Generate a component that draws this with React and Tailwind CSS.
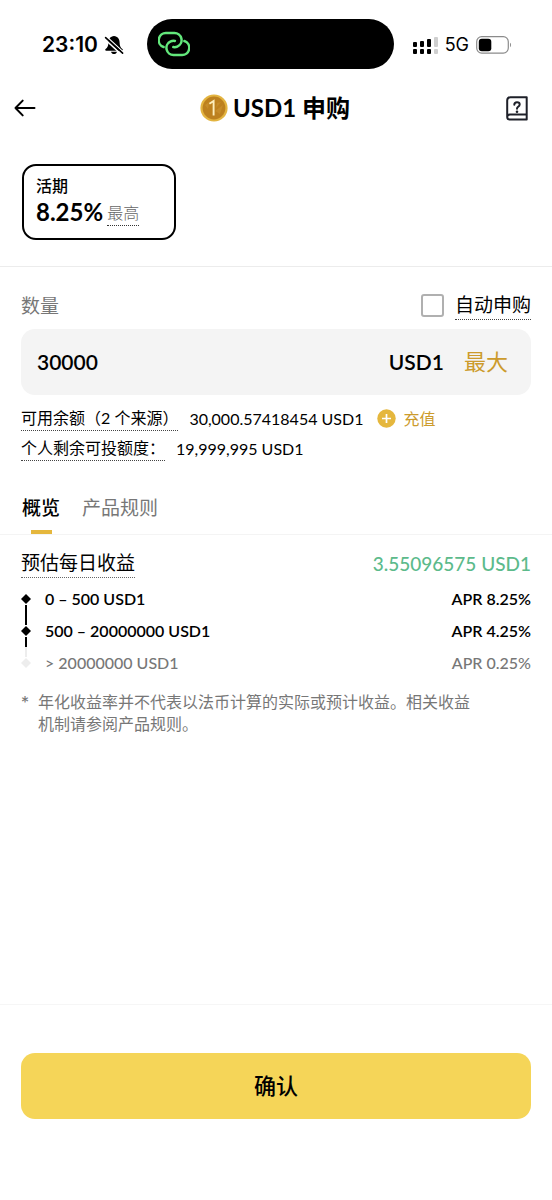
import React from "react";

const tiers = [
  { range: "0 – 500 USD1", apr: "APR 8.25%", active: true },
  { range: "500 – 20000000 USD1", apr: "APR 4.25%", active: true },
  { range: "> 20000000 USD1", apr: "APR 0.25%", active: false },
];

function StatusBar() {
  return (
    <div className="flex h-[88px] items-center pr-[40px] pl-[42px] font-['Inter','Noto_Sans_CJK_SC',sans-serif]">
      <div className="flex w-[105px] items-center gap-[6px] pt-[2px]">
        <span className="text-[21px] leading-6 font-semibold">23:10</span>
        <svg className="h-[20px] w-[20px]" viewBox="0 0 20 20" fill="none" aria-hidden="true">
          <path d="M10 1c-3.600.4-5.600 2.900-5.600 6.400 0 3.600-1 5.100-2.800 6.600-.8.600-.4 1.700.600 1.700h15.600c1 0 1.400-1.100.600-1.700-1.800-1.500-2.800-3-2.800-6.600 0-3.500-2-6-5.600-6.400zM7 16.700h6c-.4 1.500-1.600 2.300-3 2.300s-2.600-.8-3-2.300z" fill="#000" />
          <path d="M.8 4.200 16.800 19" stroke="#fff" strokeWidth="1.600" />
          <path d="M2.800 1.800 19 16.800" stroke="#fff" strokeWidth="1.200" />
          <path d="M1.600 2.600 18.600 18.200" stroke="#000" strokeWidth="1.600" strokeLinecap="round" />
        </svg>
      </div>
      <div className="flex h-[50px] min-w-0 flex-1 items-center rounded-full bg-black pl-[11px]">
        <svg className="h-[26px] w-[32px]" viewBox="0 0 32 26" fill="none" stroke="#63e87c" strokeWidth="2.500" strokeLinecap="round" aria-hidden="true">
          <path d="M5.600 16A7.200 7.200 0 0 1 8.300 2H16.200A7.100 7.100 0 0 1 19.300 15.600Q17.500 16.500 15.300 16.100" />
          <path d="M26.400 10A7.200 7.200 0 0 1 23.700 24H15.800A7.100 7.100 0 0 1 12.700 10.400Q14.500 9.500 16.900 9.900" />
        </svg>
      </div>
      <div className="ml-[19px] flex items-center gap-[7px] pt-[2px]">
        <svg className="h-[18px] w-[25px]" viewBox="0 0 25 18" aria-hidden="true">
          <rect x="0" y="6" width="4" height="5" rx="1" />
          <rect x="7" y="5" width="4" height="6" rx="1" />
          <rect x="14" y="3" width="4" height="8" rx="1" />
          <rect x="21" y="1" width="4" height="10" rx="1" fill="#cfcfcf" />
          <rect x="0" y="13" width="4" height="5" rx="1" />
          <rect x="7" y="13" width="4" height="5" rx="1" />
          <rect x="14" y="13" width="4" height="5" rx="1" />
          <rect x="21" y="13" width="4" height="5" rx="1" fill="#cfcfcf" />
        </svg>
        <span className="text-[18px] leading-6">5G</span>
        <svg className="h-[18px] w-[36px]" viewBox="0 0 36 18" aria-hidden="true">
          <rect x="0.700" y="0.700" width="31.600" height="16.400" rx="5" fill="none" stroke="#8b8b8b" strokeWidth="1.200" />
          <rect x="2.800" y="2.800" width="12.500" height="12.400" rx="3" />
          <path d="M34 6.800c1.400.6 1.400 3.800 0 4.400z" fill="#8b8b8b" />
        </svg>
      </div>
    </div>
  );
}

function Coin() {
  return (
    <svg className="h-[28px] w-[28px]" viewBox="0 0 28 28" aria-hidden="true">
      <circle cx="14" cy="14" r="13.600" fill="#e3b440" />
      <circle cx="14" cy="14" r="11.400" fill="#bd811f" />
      <path d="M15 17l8-6-3 9zM17 9l4-1-5 6zM5 11l4-3-1 7z" fill="#c68c2a" />
      <path d="M9.400 9.800 13.600 7V21.600" fill="none" stroke="#fdeebb" strokeWidth="1.900" />
    </svg>
  );
}

function Header() {
  return (
    <header className="grid h-10 grid-cols-[1fr_auto_1fr] items-center pr-[24px] pl-[14px]">
      <button type="button" aria-label="返回" className="justify-self-start">
        <svg className="h-[18px] w-[22px]" viewBox="0 0 22 18" fill="none" stroke="#000" strokeWidth="2" strokeLinecap="round" strokeLinejoin="round" aria-hidden="true">
          <path d="M20.500 9H1.500M8.700 1.600 1.500 9l7.200 7.400" />
        </svg>
      </button>
      <h1 className="flex items-center gap-[5px] pl-[8px] text-[24px] leading-8 font-bold">
        <Coin />
        <span>USD1 申购</span>
      </h1>
      <button type="button" aria-label="帮助" className="justify-self-end">
        <svg className="h-[25px] w-[22px]" viewBox="0 0 22 25" fill="none" stroke="#1e2029" strokeWidth="2" strokeLinejoin="round" aria-hidden="true">
          <path d="M1.200 21V4.500Q1.200 1.300 4.400 1.300H20.700V23.600H4Q1.200 23.600 1.200 21 1.200 18.400 4 18.400H20.500" />
          <path d="M8.300 8.700Q8.300 6.200 11 6.200t2.700 2.300Q13.700 10 12 10.900 11 11.500 11 12.800" strokeLinecap="round" />
          <circle cx="11" cy="15.700" r="1.300" fill="#1e2029" stroke="none" />
        </svg>
      </button>
    </header>
  );
}

function TierMarker({ index }) {
  const active = index < 2;
  return (
    <span className="flex w-[10px] flex-col items-center self-stretch" aria-hidden="true">
      <span className={index === 0 ? "w-[2px] flex-1" : index === 1 ? "w-[2px] flex-1 bg-black" : "w-[2px] flex-1 bg-[#ededed]"} />
      <svg className="h-[12px] w-[10px]" viewBox="0 0 10 12">
        <path d="M5 1 10 6 5 11 0 6z" fill={active ? "#000" : "#ededed"} />
      </svg>
      <span className={active ? "w-[2px] flex-1 bg-black" : "w-[2px] flex-1"} />
    </span>
  );
}

export default function App() {
  return (
    <div className="flex min-h-screen flex-col bg-white font-['Lato','Noto_Sans_CJK_SC',sans-serif] text-black">
      <StatusBar />
      <Header />

      <section className="border-b border-[#ececec] px-[22px] pt-[36px] pb-[26px]">
        <button type="button" className="block w-[154px] rounded-[14px] border-2 border-black px-[12px] pt-[8px] pb-[12px] text-left">
          <span className="block text-[16px] leading-6 font-medium">活期</span>
          <span className="flex items-center gap-[4px]">
            <span className="text-[24px] leading-7 font-bold">8.25%</span>
            <span className="mt-[3px] border-b border-dotted border-[#333] text-[16px] leading-6 font-light text-[#666]">最高</span>
          </span>
        </button>
      </section>

      <section className="px-[21px] pt-[24px]">
        <div className="flex items-center justify-between">
          <label htmlFor="amount" className="text-[19px] leading-7 text-[#777]">数量</label>
          <div className="flex items-center gap-[11px]">
            <input id="auto" type="checkbox" className="h-[23px] w-[23px] appearance-none rounded-[3px] border-2 border-[#b0b0b0] bg-white checked:bg-[#f5d558]" />
            <label htmlFor="auto" className="border-b border-dotted border-[#444] text-[19px] leading-7">自动申购</label>
          </div>
        </div>
        <div className="mt-[9px] flex h-[66px] items-center rounded-[14px] bg-[#f4f4f4] pr-[23px] pl-[16px]">
          <input id="amount" type="text" inputMode="decimal" defaultValue="30000" className="min-w-0 flex-1 bg-transparent text-[21px] leading-8 font-semibold outline-none" />
          <span className="text-[21px] leading-8 font-semibold">USD1</span>
          <button type="button" className="ml-[20px] text-[22px] leading-8 text-[#cc9b2c]">最大</button>
        </div>
        <div className="mt-[11px] flex flex-col gap-[5px]">
          <div className="flex items-center text-[16px] leading-6">
            <span className="border-b border-dotted border-[#444]">可用余额（2 个来源）</span>
            <span className="ml-[11px]">30,000.57418454 USD1</span>
            <button type="button" className="ml-[14px] flex items-center gap-[7px] text-[#cc9b2c]">
              <svg className="h-[19px] w-[19px]" viewBox="0 0 19 19" aria-hidden="true">
                <circle cx="9.500" cy="9.500" r="9.200" fill="#e5b73d" />
                <path d="M9.500 5v9M5 9.500h9" stroke="#fff" strokeWidth="1.700" />
              </svg>
              充值
            </button>
          </div>
          <div className="flex items-center text-[16px] leading-6">
            <span className="border-b border-dotted border-[#444]">个人剩余可投额度：</span>
            <span className="ml-[11px]">19,999,995 USD1</span>
          </div>
        </div>
      </section>

      <nav role="tablist" className="mt-[31px] flex gap-[22px] border-b border-[#f4f4f4] px-[22px] text-[19px] leading-8">
        <button type="button" role="tab" aria-selected="true" className="flex flex-col items-center font-medium">
          概览
          <span className="mt-[6px] h-[4px] w-[21px] bg-[#e5b73d]" />
        </button>
        <button type="button" role="tab" aria-selected="false" className="pb-[10px] text-[#777]">产品规则</button>
      </nav>

      <main className="flex-1 px-[21px] pt-[14px]">
        <div className="flex items-center justify-between">
          <h2 className="border-b border-dotted border-[#666] text-[19px] leading-7">预估每日收益</h2>
          <span className="text-[19px] leading-7 font-medium text-[#5cba8b]">3.55096575 USD1</span>
        </div>
        <ul className="mt-[5px]">
          {tiers.map((tier, index) => (
            <li
              key={tier.range}
              className={
                tier.active
                  ? "flex h-8 items-center text-[16px] leading-6 font-semibold"
                  : "flex h-8 items-center text-[16px] leading-6 font-medium text-[#777]"
              }
            >
              <TierMarker index={index} />
              <span className="ml-[14px] flex-1">{tier.range}</span>
              <span>{tier.apr}</span>
            </li>
          ))}
        </ul>
        <div className="mt-[12px] flex gap-[9px] pr-[48px] text-[16px] leading-[22px] text-[#777]">
          <span className="font-['Inter',sans-serif]">*</span>
          <p>年化收益率并不代表以法币计算的实际或预计收益。相关收益机制请参阅产品规则。</p>
        </div>
      </main>

      <footer className="border-t border-[#f6f6f6] px-[21px] pt-[48px] pb-[81px]">
        <button type="button" className="h-[66px] w-full rounded-[14px] bg-[#f5d558] text-[22px] leading-8 font-medium">确认</button>
      </footer>
    </div>
  );
}
